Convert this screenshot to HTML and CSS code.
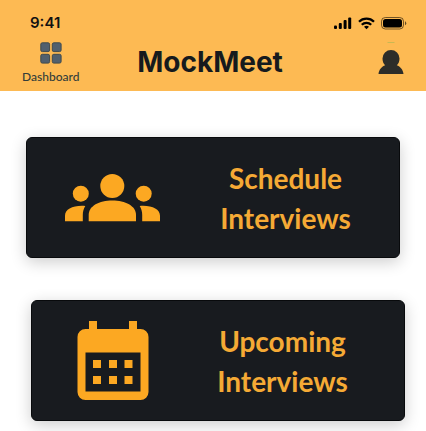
FILE: index.html
```html
<!DOCTYPE html>
<html lang="en">
<head>
<meta charset="utf-8">
<meta name="viewport" content="width=device-width, initial-scale=1">
<title>MockMeet</title>
<link rel="stylesheet" href="styles.css">
</head>
<body>
<header class="header">
  <div class="status">
    <time class="clock">9:41</time>
    <svg class="indicators" width="74" height="13" viewBox="0 0 74 13" aria-hidden="true">
      <rect x="0" y="8.500" width="3" height="3.500" rx="1"/>
      <rect x="4.800" y="6" width="3" height="6" rx="1"/>
      <rect x="9.600" y="3" width="3" height="9" rx="1"/>
      <rect x="14.200" y="0.500" width="3" height="11.500" rx="1"/>
      <g fill="none" stroke="#000" stroke-width="2.300">
        <path d="M25 4.700a10.700 10.700 0 0 1 15 0"/>
        <path d="M27.800 7.800a6.700 6.700 0 0 1 9.400 0"/>
      </g>
      <path d="M30 9.700a3.900 3.900 0 0 1 5 0l-2.500 2.500z"/>
      <rect x="47.500" y="0.500" width="22" height="11.500" rx="3.800" fill="none" stroke="#000" stroke-opacity=".55"/>
      <rect x="49" y="2" width="19" height="8.500" rx="2.500"/>
      <path d="M71 4.300v4a2.200 2.200 0 0 0 0-4z" fill-opacity=".6"/>
    </svg>
  </div>
  <nav class="bar">
    <a class="dashboard" href="#dashboard">
      <svg width="22" height="22" viewBox="0 0 22 22" fill="#51606e" stroke="#3f4a4e" stroke-width="1" aria-hidden="true">
        <rect x="0.800" y="0.800" width="8.800" height="8.800" rx="1.500"/>
        <rect x="12.300" y="0.800" width="8.800" height="8.800" rx="1.500"/>
        <rect x="0.800" y="12.300" width="8.800" height="8.800" rx="1.500"/>
        <rect x="12.300" y="12.300" width="8.800" height="8.800" rx="1.500"/>
      </svg>
      <span>Dashboard</span>
    </a>
    <h1 class="title">MockMeet</h1>
    <a class="profile" href="#profile" aria-label="Profile">
      <svg width="26" height="34" viewBox="0 0 26 34" fill="#2d2d29" aria-hidden="true">
        <path d="M9.500 2.500h7" stroke="#c9b852" stroke-width="1"/>
        <path d="M13 10a8.500 8.500 0 0 1 8.500 8.500c0 3-1 5.300-2.700 6.800 3.500 1.400 6.200 4.200 6.700 8.700H.5c.5-4.500 3.200-7.300 6.700-8.700-1.700-1.500-2.700-3.800-2.700-6.800A8.500 8.500 0 0 1 13 10z"/>
      </svg>
    </a>
  </nav>
</header>
<main class="actions">
  <a class="card schedule" href="#schedule">
    <svg width="95" height="48" viewBox="0 0 95 48" fill="#fca822" aria-hidden="true">
      <circle cx="47.300" cy="12" r="12"/>
      <circle cx="15.800" cy="19.700" r="8"/>
      <circle cx="78.700" cy="19.700" r="8"/>
      <path d="M23.700 47.300V41c0-9 10.500-14.400 23.600-14.400S71 32 71 41v6.300z"/>
      <path d="M0 47.300v-5.500c0-7 8.500-10.800 20.300-9.900-1.600 2.800-2.500 5.300-2.500 9v6.400z"/>
      <path d="M95 47.300v-5.500c0-7-8.500-10.800-20.300-9.900 1.600 2.800 2.500 5.300 2.500 9v6.400z"/>
    </svg>
    <span class="label">Schedule<br>Interviews</span>
  </a>
  <a class="card upcoming" href="#upcoming">
    <svg width="72" height="79" viewBox="0 0 72 79" fill="#fca822" aria-hidden="true">
      <path fill-rule="evenodd" d="M12 0h8v8h32V0h8v8h3.500a8 8 0 0 1 8 8v55a8 8 0 0 1-8 8H8.500a8 8 0 0 1-8-8V16a8 8 0 0 1 8-8H12zM8.500 31.500v39h55v-39z"/>
      <path d="M16 39h8v8h-8zM32 39h8v8h-8zM47.500 39h8v8h-8zM16 55h8v8h-8zM32 55h8v8h-8zM47.500 55h8v8h-8z"/>
    </svg>
    <span class="label">Upcoming<br>Interviews</span>
  </a>
</main>
</body>
</html>
```
FILE: styles.css
```css
* {
  box-sizing: border-box;
}

body {
  margin: 0;
  background: #fff;
  font-family: Lato, "Open Sans", sans-serif;
}

a {
  color: inherit;
  text-decoration: none;
}

svg {
  display: block;
  flex: none;
}

.header {
  padding: 12px 18px 5px 22px;
  background: #fdba53;
}

.status {
  display: flex;
  align-items: center;
  justify-content: space-between;
  height: 22px;
  padding-left: 8px;
}

.clock {
  font: 600 15px/22px Inter, sans-serif;
  color: #111;
}

.bar {
  display: grid;
  grid-template-columns: 1fr auto 1fr;
  align-items: center;
  padding-top: 6px;
}

.dashboard {
  display: flex;
  flex-direction: column;
  align-items: center;
  justify-self: start;
  gap: 4px;
  font-size: 12px;
  font-weight: 500;
  line-height: 17px;
  color: #333d3a;
}

.title {
  margin: 0;
  padding: 0 10px 2px 0;
  font: 700 28px/36px Inter, sans-serif;
  color: #161a1d;
}

.profile {
  justify-self: end;
  padding: 0 4px 12px 0;
}

.actions {
  display: flex;
  flex-direction: column;
  gap: 42px;
  padding: 46px 21px 10px 26px;
}

.card {
  display: flex;
  align-items: center;
  gap: 12px;
  min-height: 121px;
  border: 1px solid #080a0c;
  border-radius: 6px;
  background: #181b1f;
  box-shadow: 0 4px 16px rgba(0, 0, 0, 0.2);
}

.schedule {
  margin-right: 5px;
  padding-left: 38px;
}

.upcoming {
  margin-left: 5px;
  padding-left: 45px;
}

.label {
  flex: 1;
  font-size: 28px;
  font-weight: 700;
  line-height: 40px;
  text-align: center;
  color: #f5aa35;
}
```
